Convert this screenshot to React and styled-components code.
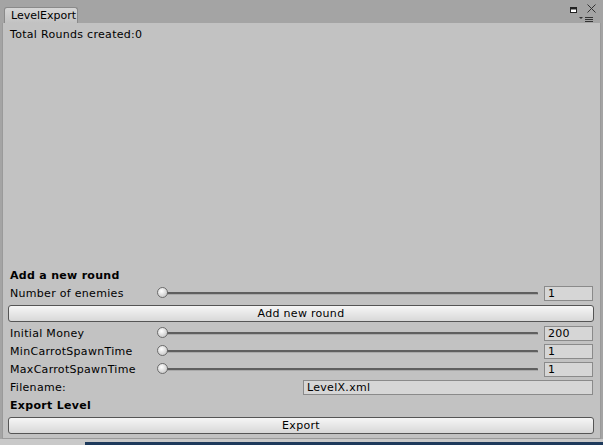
import React from 'react';
import styled, { createGlobalStyle } from 'styled-components';

const GlobalStyle = createGlobalStyle`
  html, body {
    margin: 0;
    padding: 0;
    background: #a4a4a4;
  }
  body {
    font-family: "DejaVu Sans", "Liberation Sans", sans-serif;
    font-size: 11px;
    letter-spacing: 0.3px;
    color: #000;
  }
`;

const Frame = styled.div`
  width: 603px;
  height: 445px;
  display: flex;
  flex-direction: column;
  overflow: hidden;
`;

const TabBar = styled.div`
  height: 23px;
  flex: none;
  display: flex;
  align-items: flex-end;
  background: #a4a4a4;
  padding-left: 4px;
  position: relative;
`;

const Tab = styled.div`
  width: 74px;
  height: 16px;
  box-sizing: border-box;
  padding-left: 6px;
  line-height: 15px;
  letter-spacing: 0;
  background: linear-gradient(#d6d6d6, #c2c2c2);
  border: 1px solid #8a8a8a;
  border-bottom: none;
  border-radius: 3px 3px 0 0;
`;

const TabIcons = styled.div`
  position: absolute;
  right: 6px;
  top: 3px;
  line-height: 0;
`;

const Window = styled.div`
  flex: 1;
  display: flex;
  flex-direction: column;
  background: #c2c2c2;
  border-left: 1px solid #9a9a9a;
  border-right: 1px solid #9a9a9a;
  border-bottom: 1px solid #9a9a9a;
  margin: 0 2px;
  padding: 2px 7px 2px 5px;
`;

const Spacer = styled.div`
  flex: 1;
`;

const Row = styled.div`
  height: 18px;
  display: flex;
  align-items: center;
`;

const Label = styled.div`
  width: 147px;
  padding-left: 2px;
  flex: none;
  font-weight: ${(p) => (p.bold ? 700 : 400)};
  white-space: nowrap;
`;

const Track = styled.div`
  flex: 1;
  height: 12px;
  position: relative;
  margin-right: 6px;

  &::before {
    content: '';
    position: absolute;
    left: 5px;
    right: 0;
    top: 5px;
    height: 2px;
    background: #5f5f5f;
    border-bottom: 1px solid #a9a9a9;
    border-radius: 1px;
  }
`;

const Thumb = styled.div`
  position: absolute;
  left: 0;
  top: 0;
  width: 9px;
  height: 9px;
  border-radius: 50%;
  border: 1px solid #6c6c6c;
  background: radial-gradient(circle at 40% 35%, #ffffff, #d0d0d0 70%, #b8b8b8);
`;

const Field = styled.div`
  width: ${(p) => p.width || 49}px;
  height: 15px;
  box-sizing: border-box;
  border: 1px solid #8a8a8a;
  background: #d6d6d6;
  padding-left: 3px;
  line-height: 13px;
  flex: none;
  margin-left: ${(p) => p.offset || 0}px;
`;

const Button = styled.button`
  display: block;
  width: 100%;
  height: 17px;
  margin: 0;
  padding: 0;
  font: inherit;
  letter-spacing: inherit;
  color: #000;
  border: 1px solid #555;
  border-radius: 3px;
  background: linear-gradient(#f6f6f6, #d8d8d8);
  line-height: 15px;
`;

const ButtonRow = styled.div`
  height: 22px;
  display: flex;
  align-items: center;
  margin-right: -1px;
`;

const Desktop = styled.div`
  height: 6px;
  flex: none;
  background: #c9c9c9;
  display: flex;
  justify-content: flex-end;
`;

const Taskbar = styled.div`
  width: 518px;
  height: 3px;
  margin-top: 3px;
  background: #1e3a5c;
`;

function Slider({ label, value }) {
  return (
    <Row>
      <Label>{label}</Label>
      <Track>
        <Thumb />
      </Track>
      <Field>{value}</Field>
    </Row>
  );
}

export default function App() {
  return (
    <Frame>
      <GlobalStyle />
      <TabBar>
        <Tab>LevelExport</Tab>
        <TabIcons>
          <svg width="30" height="20" viewBox="0 0 30 20">
            <rect x="3.5" y="4.5" width="6" height="5" fill="#fff" stroke="#222" />
            <rect x="3.5" y="4.5" width="6" height="2" fill="#222" />
            <path d="M20.5 1.5 L28.5 9.5 M28.5 1.5 L20.5 9.5" stroke="#333" strokeWidth="1" />
            <path d="M12 14 L16 14 L14 16 Z" fill="#333" />
            <path d="M18 14.5 H26 M18 16.5 H26 M18 18.5 H26" stroke="#333" strokeWidth="1" />
          </svg>
        </TabIcons>
      </TabBar>
      <Window>
        <Row>
          <Label>Total Rounds created:0</Label>
        </Row>
        <Spacer />
        <Row>
          <Label bold>Add a new round</Label>
        </Row>
        <Slider label="Number of enemies" value="1" />
        <ButtonRow>
          <Button>Add new round</Button>
        </ButtonRow>
        <Slider label="Initial Money" value="200" />
        <Slider label="MinCarrotSpawnTime" value="1" />
        <Slider label="MaxCarrotSpawnTime" value="1" />
        <Row>
          <Label>Filename:</Label>
          <Field width={290} offset={146}>LevelX.xml</Field>
        </Row>
        <Row>
          <Label bold>Export Level</Label>
        </Row>
        <ButtonRow>
          <Button>Export</Button>
        </ButtonRow>
      </Window>
      <Desktop>
        <Taskbar />
      </Desktop>
    </Frame>
  );
}
